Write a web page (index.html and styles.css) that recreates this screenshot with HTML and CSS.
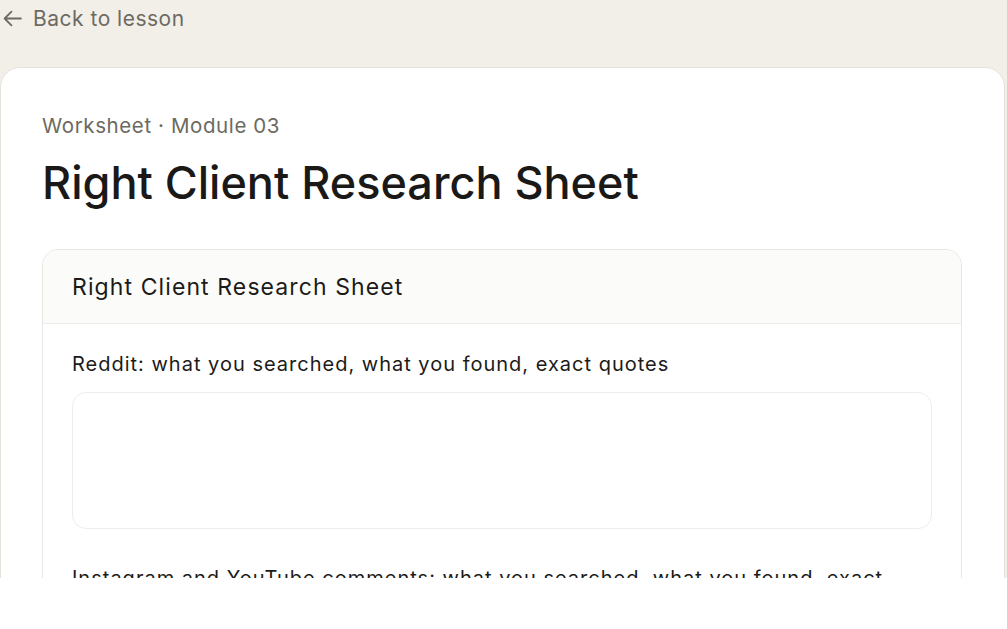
FILE: index.html
```html
<!DOCTYPE html>
<html lang="en">
<head>
<meta charset="utf-8">
<title>Right Client Research Sheet</title>
<link rel="stylesheet" href="styles.css">
</head>
<body>
<div class="viewport">
  <a class="back" href="#">
    <svg class="back-icon" width="21" height="21" viewBox="0 0 20 20" fill="none" stroke="currentColor" stroke-width="1.7" stroke-linecap="round" stroke-linejoin="round"><path d="M18 10H2.5M9 3.5L2.5 10 9 16.5"/></svg>
    <span>Back to lesson</span>
  </a>
  <main class="sheet">
    <p class="eyebrow">Worksheet · Module 03</p>
    <h1 class="title">Right Client Research Sheet</h1>
    <section class="panel">
      <header class="panel-head">Right Client Research Sheet</header>
      <div class="panel-body">
        <div class="field">
          <label class="field-label">Reddit: what you searched, what you found, exact quotes</label>
          <div class="textarea"></div>
        </div>
        <div class="field">
          <label class="field-label">Instagram and YouTube comments: what you searched, what you found, exact quotes</label>
          <div class="textarea"></div>
        </div>
      </div>
    </section>
  </main>
</div>
</body>
</html>
```
FILE: styles.css
```css
* { box-sizing: border-box; }
html, body { margin: 0; padding: 0; background: #ffffff; }
body { font-family: Inter, "Noto Sans", sans-serif; color: #1c1b19; }
.viewport {
  height: 578px;
  overflow: hidden;
  background: #f2efe9;
  padding: 0 2px 0 0;
}
.back {
  display: flex;
  align-items: center;
  gap: 10px;
  height: 37px;
  padding-left: 2px;
  color: #6d6a62;
  text-decoration: none;
  font-size: 21px;
  letter-spacing: 0.5px;
}
.back-icon { flex: none; }
.sheet {
  margin-top: 30px;
  background: #fff;
  border: 1px solid #e6e3dd;
  border-radius: 20px;
  padding: 44px 42px 40px 41px;
  min-height: 700px;
}
.eyebrow {
  margin: 0;
  font-size: 20.5px;
  letter-spacing: 0.6px;
  color: #6b6a61;
  line-height: 28px;
}
.title {
  margin: 15px 0 0;
  font-size: 45px;
  font-weight: 500;
  line-height: 56px;
  letter-spacing: 0;
  color: #1a1917;
}
.panel {
  margin-top: 38px;
  border: 1px solid #e8e6e2;
  border-radius: 16px;
  overflow: hidden;
}
.panel-head {
  background: #fbfbfa;
  height: 74px;
  display: flex;
  align-items: center;
  padding: 0 29px;
  font-size: 23px;
  letter-spacing: 1.1px;
  border-bottom: 1px solid #ecebe8;
}
.panel-body { padding: 26px 29px 30px; display: flex; flex-direction: column; gap: 35px; }
.field { display: flex; flex-direction: column; gap: 14px; }
.field-label { font-size: 20px; line-height: 28px; letter-spacing: 1px; color: #1c1b19; }
.textarea {
  height: 137px;
  border: 1px solid #eeedea;
  border-radius: 14px;
  background: #fff;
}
```
